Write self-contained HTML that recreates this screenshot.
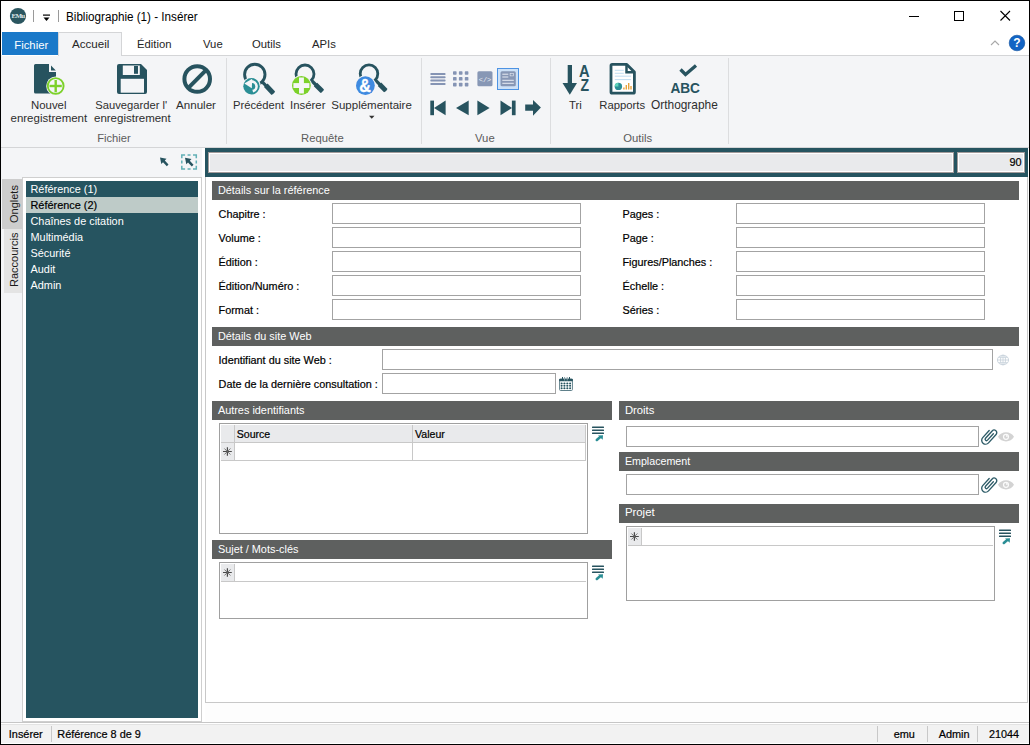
<!DOCTYPE html>
<html><head><meta charset="utf-8">
<style>
*{box-sizing:border-box;margin:0;padding:0}
html,body{width:1030px;height:745px;overflow:hidden;background:#fff}
body{position:relative;font-family:"Liberation Sans",sans-serif;color:#000}
.a{position:absolute}
.t{position:absolute;white-space:nowrap;line-height:1;-webkit-text-stroke:0.2px currentColor}
svg{position:absolute;left:0;top:0}
</style></head><body>
<div class="a" style="left:0px;top:0px;width:1030px;height:1px;background:#000;"></div>
<div class="a" style="left:0px;top:0px;width:1px;height:745px;background:#000;"></div>
<div class="a" style="left:1029px;top:0px;width:1px;height:745px;background:#000;"></div>
<div class="a" style="left:0px;top:744px;width:1030px;height:1px;background:#000;"></div>
<div class="t" style="left:66.30px;top:10.59px;font-size:12.3px;color:#000;-webkit-text-stroke:0;transform:scaleX(0.949);transform-origin:0 0">Bibliographie (1) - Insérer</div>
<div class="a" style="left:33px;top:10px;width:1px;height:12px;background:#9a9a9a;"></div>
<div class="a" style="left:58px;top:10px;width:1px;height:12px;background:#9a9a9a;"></div>
<div class="a" style="left:2px;top:32px;width:56px;height:23px;background:#1a79c9;"></div>
<div class="t" style="left:14.30px;top:40.43px;font-size:11.3px;color:#fff;-webkit-text-stroke:0">Fichier</div>
<div class="a" style="left:58px;top:32px;width:64px;height:24px;background:#f4f5f7;border:1px solid #d4d5d7;border-bottom:none"></div>
<div class="a" style="left:122px;top:55px;width:907px;height:1px;background:#d4d5d7;"></div>
<div class="a" style="left:1px;top:55px;width:1px;height:1px;background:#f4f5f7;"></div>
<div class="t" style="left:72.00px;top:37.78px;font-size:11.6px;color:#262626;-webkit-text-stroke:0">Accueil</div>
<div class="t" style="left:137.00px;top:39.43px;font-size:11.3px;color:#262626;-webkit-text-stroke:0">Édition</div>
<div class="t" style="left:203.00px;top:39.43px;font-size:11.3px;color:#262626;-webkit-text-stroke:0">Vue</div>
<div class="t" style="left:252.00px;top:39.43px;font-size:11.3px;color:#262626;-webkit-text-stroke:0">Outils</div>
<div class="t" style="left:312.00px;top:39.43px;font-size:11.3px;color:#262626;-webkit-text-stroke:0">APIs</div>
<div class="a" style="left:1px;top:56px;width:1028px;height:91px;background:#f4f5f7;"></div>
<div class="a" style="left:1px;top:147px;width:1028px;height:1px;background:#d4d5d7;"></div>
<div class="a" style="left:226px;top:58px;width:1px;height:86px;background:#dcdddf;"></div>
<div class="a" style="left:421px;top:58px;width:1px;height:86px;background:#dcdddf;"></div>
<div class="a" style="left:550px;top:58px;width:1px;height:86px;background:#dcdddf;"></div>
<div class="a" style="left:728px;top:58px;width:1px;height:86px;background:#dcdddf;"></div>
<div class="t" style="left:31.00px;top:100.35px;font-size:11.4px;color:#2e2e2e;-webkit-text-stroke:0">Nouvel</div>
<div class="t" style="left:10.50px;top:112.97px;font-size:11.5px;color:#2e2e2e;-webkit-text-stroke:0">enregistrement</div>
<div class="t" style="left:95.30px;top:99.92px;font-size:11.2px;color:#2e2e2e;-webkit-text-stroke:0">Sauvegarder l'</div>
<div class="t" style="left:94.00px;top:112.97px;font-size:11.5px;color:#2e2e2e;-webkit-text-stroke:0">enregistrement</div>
<div class="t" style="left:176.00px;top:99.18px;font-size:11.6px;color:#2e2e2e;-webkit-text-stroke:0">Annuler</div>
<div class="t" style="left:233.00px;top:99.92px;font-size:11.2px;color:#2e2e2e;-webkit-text-stroke:0">Précédent</div>
<div class="t" style="left:290.00px;top:100.35px;font-size:11.4px;color:#2e2e2e;-webkit-text-stroke:0">Insérer</div>
<div class="t" style="left:331.30px;top:100.27px;font-size:11.5px;color:#2e2e2e;-webkit-text-stroke:0">Supplémentaire</div>
<div class="t" style="left:569.00px;top:100.35px;font-size:11.4px;color:#2e2e2e;-webkit-text-stroke:0">Tri</div>
<div class="t" style="left:599.30px;top:100.43px;font-size:11.3px;color:#2e2e2e;-webkit-text-stroke:0">Rapports</div>
<div class="t" style="left:651.00px;top:99.93px;font-size:11.9px;color:#2e2e2e;-webkit-text-stroke:0">Orthographe</div>
<div class="t" style="left:97.20px;top:133.32px;font-size:11.2px;color:#5c5c5c;-webkit-text-stroke:0">Fichier</div>
<div class="t" style="left:301.00px;top:132.93px;font-size:11.3px;color:#5c5c5c;-webkit-text-stroke:0">Requête</div>
<div class="t" style="left:475.00px;top:132.93px;font-size:11.3px;color:#5c5c5c;-webkit-text-stroke:0">Vue</div>
<div class="t" style="left:623.20px;top:132.93px;font-size:11.3px;color:#5c5c5c;-webkit-text-stroke:0">Outils</div>
<div class="a" style="left:1px;top:148px;width:204px;height:574px;background:#f4f5f7;"></div>
<div class="a" style="left:2px;top:179px;width:20px;height:50px;background:#cdcdcd;"></div>
<div class="a" style="left:4px;top:229px;width:18px;height:64px;background:#e4e4e4;"></div>
<div class="a" style="left:22px;top:177px;width:180px;height:545px;background:#fff;border:1px solid #cfcfcf"></div>
<div class="a" style="left:26px;top:181px;width:172px;height:537px;background:#265460;"></div>
<div class="a" style="left:26px;top:197px;width:172px;height:16px;background:#becbc8;"></div>
<div class="t" style="left:30.50px;top:183.97px;font-size:10.9px;color:#fff;-webkit-text-stroke:0">Référence (1)</div>
<div class="t" style="left:30.50px;top:199.97px;font-size:10.9px;color:#000;">Référence (2)</div>
<div class="t" style="left:30.50px;top:215.97px;font-size:10.9px;color:#fff;-webkit-text-stroke:0">Chaînes de citation</div>
<div class="t" style="left:30.50px;top:231.97px;font-size:10.9px;color:#fff;-webkit-text-stroke:0">Multimédia</div>
<div class="t" style="left:30.50px;top:247.97px;font-size:10.9px;color:#fff;-webkit-text-stroke:0">Sécurité</div>
<div class="t" style="left:30.50px;top:263.97px;font-size:10.9px;color:#fff;-webkit-text-stroke:0">Audit</div>
<div class="t" style="left:30.50px;top:279.97px;font-size:10.9px;color:#fff;-webkit-text-stroke:0">Admin</div>
<div class="t" style="left:9.3px;top:222.6px;font-size:11px;color:#1a1a1a;-webkit-text-stroke:0;transform-origin:0 0;transform:rotate(-90deg)">Onglets</div>
<div class="t" style="left:9.3px;top:286.5px;font-size:11px;color:#1a1a1a;-webkit-text-stroke:0;transform-origin:0 0;transform:rotate(-90deg)">Raccourcis</div>
<div class="a" style="left:202px;top:148px;width:3px;height:574px;background:#fff;"></div>
<div class="a" style="left:205px;top:177px;width:823px;height:526px;background:#fff;border:1px solid #c8c8c8;border-top:none"></div>
<div class="a" style="left:205px;top:703px;width:824px;height:19px;background:#fdfdfd;"></div>
<div class="a" style="left:1px;top:722px;width:1028px;height:1px;background:#c6c6c6;"></div>
<div class="a" style="left:1px;top:723px;width:1028px;height:1px;background:#fff;"></div>
<div class="a" style="left:1px;top:724px;width:1028px;height:1px;background:#e3e3e3;"></div>
<div class="a" style="left:1px;top:725px;width:1028px;height:18px;background:#f2f2f2;"></div>
<div class="a" style="left:1px;top:743px;width:1028px;height:1px;background:#fff;"></div>
<div class="a" style="left:51px;top:726px;width:1px;height:16px;background:#c8c8c8;"></div>
<div class="a" style="left:877px;top:726px;width:1px;height:16px;background:#c8c8c8;"></div>
<div class="a" style="left:927px;top:726px;width:1px;height:16px;background:#c8c8c8;"></div>
<div class="a" style="left:977px;top:726px;width:1px;height:16px;background:#c8c8c8;"></div>
<div class="t" style="left:8.80px;top:728.77px;font-size:10.9px;color:#000;">Insérer</div>
<div class="t" style="left:57.30px;top:728.77px;font-size:10.9px;color:#000;">Référence 8 de 9</div>
<div class="t" style="left:893.70px;top:728.77px;font-size:10.9px;color:#000;">emu</div>
<div class="t" style="left:938.70px;top:728.77px;font-size:10.9px;color:#000;">Admin</div>
<div class="t" style="left:989.00px;top:728.86px;font-size:10.8px;color:#000;">21044</div>
<div class="a" style="left:205px;top:148px;width:823px;height:29px;background:#265460;"></div>
<div class="a" style="left:208px;top:152px;width:746px;height:21px;background:#e9eaec;border:1px solid #a29b9b;box-shadow:inset 0 0 0 1px #fff"></div>
<div class="a" style="left:957px;top:152px;width:68px;height:21px;background:#e9eaec;border:1px solid #a29b9b;box-shadow:inset 0 0 0 1px #fff"></div>
<div class="t" style="left:1009.50px;top:157.27px;font-size:10.9px;color:#000;">90</div>
<div class="a" style="left:212px;top:181px;width:807px;height:19px;background:#5e605f;"></div>
<div class="t" style="left:217.90px;top:184.57px;font-size:10.9px;color:#fff;-webkit-text-stroke:0">Détails sur la référence</div>
<div class="t" style="left:218.60px;top:209.02px;font-size:10.85px;color:#000;">Chapitre :</div>
<div class="a" style="left:332px;top:203px;width:249px;height:21px;background:#fff;border:1px solid #a3a3a3"></div>
<div class="t" style="left:622.50px;top:209.02px;font-size:10.85px;color:#000;">Pages :</div>
<div class="a" style="left:736px;top:203px;width:249px;height:21px;background:#fff;border:1px solid #a3a3a3"></div>
<div class="t" style="left:218.60px;top:233.02px;font-size:10.85px;color:#000;">Volume :</div>
<div class="a" style="left:332px;top:227px;width:249px;height:21px;background:#fff;border:1px solid #a3a3a3"></div>
<div class="t" style="left:622.50px;top:233.02px;font-size:10.85px;color:#000;">Page :</div>
<div class="a" style="left:736px;top:227px;width:249px;height:21px;background:#fff;border:1px solid #a3a3a3"></div>
<div class="t" style="left:218.60px;top:257.02px;font-size:10.85px;color:#000;">Édition :</div>
<div class="a" style="left:332px;top:251px;width:249px;height:21px;background:#fff;border:1px solid #a3a3a3"></div>
<div class="t" style="left:622.50px;top:257.02px;font-size:10.85px;color:#000;">Figures/Planches :</div>
<div class="a" style="left:736px;top:251px;width:249px;height:21px;background:#fff;border:1px solid #a3a3a3"></div>
<div class="t" style="left:218.60px;top:281.02px;font-size:10.85px;color:#000;">Édition/Numéro :</div>
<div class="a" style="left:332px;top:275px;width:249px;height:21px;background:#fff;border:1px solid #a3a3a3"></div>
<div class="t" style="left:622.50px;top:281.02px;font-size:10.85px;color:#000;">Échelle :</div>
<div class="a" style="left:736px;top:275px;width:249px;height:21px;background:#fff;border:1px solid #a3a3a3"></div>
<div class="t" style="left:218.60px;top:305.02px;font-size:10.85px;color:#000;">Format :</div>
<div class="a" style="left:332px;top:299px;width:249px;height:21px;background:#fff;border:1px solid #a3a3a3"></div>
<div class="t" style="left:622.50px;top:305.02px;font-size:10.85px;color:#000;">Séries :</div>
<div class="a" style="left:736px;top:299px;width:249px;height:21px;background:#fff;border:1px solid #a3a3a3"></div>
<div class="a" style="left:212px;top:327px;width:807px;height:19px;background:#5e605f;"></div>
<div class="t" style="left:217.90px;top:330.57px;font-size:10.9px;color:#fff;-webkit-text-stroke:0">Détails du site Web</div>
<div class="t" style="left:218.60px;top:355.02px;font-size:10.85px;color:#000;">Identifiant du site Web :</div>
<div class="a" style="left:382px;top:349px;width:611px;height:21px;background:#fff;border:1px solid #a3a3a3"></div>
<div class="t" style="left:218.60px;top:379.02px;font-size:10.85px;color:#000;">Date de la dernière consultation :</div>
<div class="a" style="left:382px;top:373px;width:174px;height:21px;background:#fff;border:1px solid #a3a3a3"></div>
<div class="a" style="left:212px;top:401px;width:400px;height:19px;background:#5e605f;"></div>
<div class="t" style="left:217.90px;top:404.57px;font-size:10.9px;color:#fff;-webkit-text-stroke:0">Autres identifiants</div>
<div class="a" style="left:619px;top:401px;width:400px;height:19px;background:#5e605f;"></div>
<div class="t" style="left:624.90px;top:404.83px;font-size:11.3px;color:#fff;-webkit-text-stroke:0">Droits</div>
<div class="a" style="left:626px;top:426px;width:353px;height:21px;background:#fff;border:1px solid #a3a3a3"></div>
<div class="a" style="left:619px;top:452px;width:400px;height:19px;background:#5e605f;"></div>
<div class="t" style="left:624.90px;top:455.74px;font-size:10.7px;color:#fff;-webkit-text-stroke:0">Emplacement</div>
<div class="a" style="left:626px;top:474px;width:353px;height:21px;background:#fff;border:1px solid #a3a3a3"></div>
<div class="a" style="left:619px;top:504px;width:400px;height:19px;background:#5e605f;"></div>
<div class="t" style="left:624.90px;top:507.15px;font-size:11.4px;color:#fff;-webkit-text-stroke:0">Projet</div>
<div class="a" style="left:212px;top:540px;width:400px;height:19px;background:#5e605f;"></div>
<div class="t" style="left:217.90px;top:543.57px;font-size:10.9px;color:#fff;-webkit-text-stroke:0">Sujet / Mots-clés</div>
<div class="a" style="left:219px;top:423px;width:369px;height:111px;background:#fff;border:1px solid #a0a0a0"></div>
<div class="a" style="left:221px;top:425px;width:365px;height:17px;background:#e9eaec;"></div>
<div class="a" style="left:221px;top:442px;width:365px;height:1px;background:#c8c8c8;"></div>
<div class="a" style="left:234px;top:425px;width:1px;height:35px;background:#c8c8c8;"></div>
<div class="a" style="left:412px;top:425px;width:1px;height:35px;background:#c8c8c8;"></div>
<div class="a" style="left:585px;top:425px;width:1px;height:35px;background:#c8c8c8;"></div>
<div class="a" style="left:221px;top:443px;width:13px;height:17px;background:#e9eaec;"></div>
<div class="a" style="left:221px;top:460px;width:365px;height:1px;background:#c8c8c8;"></div>
<div class="t" style="left:236.70px;top:428.83px;font-size:10.6px;color:#000;">Source</div>
<div class="t" style="left:415.00px;top:428.83px;font-size:10.6px;color:#000;">Valeur</div>
<div class="a" style="left:219px;top:562px;width:369px;height:57px;background:#fff;border:1px solid #a0a0a0"></div>
<div class="a" style="left:221px;top:564px;width:13px;height:17px;background:#e9eaec;"></div>
<div class="a" style="left:234px;top:564px;width:1px;height:17px;background:#c8c8c8;"></div>
<div class="a" style="left:221px;top:581px;width:365px;height:1px;background:#c8c8c8;"></div>
<div class="a" style="left:626px;top:526px;width:369px;height:75px;background:#fff;border:1px solid #a0a0a0"></div>
<div class="a" style="left:628px;top:528px;width:13px;height:17px;background:#e9eaec;"></div>
<div class="a" style="left:641px;top:528px;width:1px;height:17px;background:#c8c8c8;"></div>
<div class="a" style="left:628px;top:545px;width:365px;height:1px;background:#c8c8c8;"></div><svg width="1030" height="745" viewBox="0 0 1030 745">
<!-- title bar icons -->
<circle cx="18" cy="16" r="8.1" fill="#2b5660"/>
<text x="18" y="18.4" font-family="Liberation Serif" font-size="7" font-weight="bold" fill="#dfe7ea" text-anchor="middle" letter-spacing="-0.7">EMu</text>
<rect x="43" y="14.5" width="7" height="1.2" fill="#000"/>
<path d="M43.5 17.5 H49.5 L46.5 21 Z" fill="#000"/>
<rect x="909" y="16" width="10" height="1" fill="#000"/>
<rect x="954.5" y="11.5" width="9" height="9" fill="none" stroke="#000" stroke-width="1"/>
<path d="M1000.5 11 L1010 20.5 M1010 11 L1000.5 20.5" stroke="#000" stroke-width="1.1"/>
<path d="M991 45 L995 41 L999 45" fill="none" stroke="#a8a8a8" stroke-width="1.1"/>
<circle cx="1017" cy="43" r="7.8" fill="#1264c4" stroke="#0d4f9e" stroke-width="0.6"/>
<text x="1017" y="47.3" font-family="Liberation Sans" font-size="12" font-weight="bold" fill="#fff" text-anchor="middle">?</text>

<!-- Nouvel enregistrement -->
<path d="M35.5 64 H49 V72 H56 V92 Q56 93.5 54.5 93.5 H35.5 Q34 93.5 34 92 V65.5 Q34 64 35.5 64 Z" fill="#27535f"/>
<path d="M51 65.5 L55.8 70.6 H51 Z" fill="#27535f"/>
<circle cx="55.7" cy="86" r="9.5" fill="#f4f5f7"/>
<circle cx="55.7" cy="86" r="7.9" fill="#f4f5f7" stroke="#7cd12a" stroke-width="1.9"/>
<rect x="54.5" y="80" width="2.4" height="12.3" fill="#7cd12a"/>
<rect x="49.5" y="84.8" width="12.3" height="2.4" fill="#7cd12a"/>

<!-- Sauvegarder -->
<path d="M119 64 H141 L147 70 V92 Q147 94 145 94 H119 Q117 94 117 92 V66 Q117 64 119 64 Z" fill="#27535f"/>
<rect x="122.8" y="65.5" width="17" height="9.5" fill="#f4f5f7"/>
<rect x="134" y="66" width="4" height="7.8" fill="#27535f"/>
<rect x="120.7" y="78.8" width="23.3" height="13.9" fill="#f4f5f7"/>

<!-- Annuler -->
<circle cx="197.2" cy="79" r="12.8" fill="none" stroke="#27535f" stroke-width="4"/>
<path d="M206.5 69.7 L187.9 88.3" stroke="#27535f" stroke-width="4"/>

<!-- Précédent -->
<circle cx="254.8" cy="74.5" r="10.2" fill="none" stroke="#27535f" stroke-width="2.9"/>
<path d="M262 81.7 L273.5 93.5" stroke="#27535f" stroke-width="3.2"/>
<path d="M265.8 85.3 L273.3 93.3" stroke="#27535f" stroke-width="5"/>
<circle cx="251.5" cy="86.3" r="9.3" fill="#f4f5f7"/>
<circle cx="251.5" cy="86.3" r="8.2" fill="#2a8e95"/>
<path d="M251.5 80.1 A6.3 6.3 0 0 1 253.1 92.5 L252.35 89.7 A3.3 3.3 0 0 0 251.5 83.1 Z" fill="#f4f5f7"/>
<path d="M244.3 83.6 L252.2 78.8 L251.8 88.2 Z" fill="#f4f5f7"/>

<!-- Insérer (query) -->
<circle cx="305" cy="74" r="9" fill="none" stroke="#27535f" stroke-width="2.8"/>
<path d="M311 80 L322.5 91.5" stroke="#27535f" stroke-width="3.3"/>
<path d="M315.5 84.5 L322.3 91.3" stroke="#27535f" stroke-width="4.8"/>
<circle cx="301.4" cy="85.5" r="10.4" fill="#f4f5f7"/>
<circle cx="301.4" cy="85.5" r="9.4" fill="#7cd12a"/>
<rect x="299" y="77.5" width="4.9" height="16" fill="#f4f5f7"/>
<rect x="293.4" y="83.1" width="16" height="4.9" fill="#f4f5f7"/>

<!-- Supplémentaire -->
<circle cx="369" cy="73.7" r="8.8" fill="none" stroke="#27535f" stroke-width="2.8"/>
<path d="M375 79.7 L386 90.8" stroke="#27535f" stroke-width="3.3"/>
<path d="M379.5 84.2 L385.8 90.6" stroke="#27535f" stroke-width="4.8"/>
<circle cx="365.4" cy="85.6" r="10.4" fill="#f4f5f7"/>
<circle cx="365.4" cy="85.6" r="9.4" fill="#3f8ae0"/>
<text x="365.1" y="91.8" font-family="Liberation Sans" font-size="18.3" font-weight="bold" fill="#fff" stroke="#fff" stroke-width="0.35" text-anchor="middle" transform="translate(365.1 0) scale(0.88 1) translate(-365.1 0)">&amp;</text>
<path d="M369 115.7 H374.5 L371.75 118.8 Z" fill="#333"/>

<!-- Vue row 1 -->
<g fill="#8594b4">
<rect x="430.3" y="73.1" width="15.3" height="2" rx="0.8"/>
<rect x="430.3" y="76.3" width="15.3" height="2" rx="0.8"/>
<rect x="430.3" y="79.6" width="15.3" height="2" rx="0.8"/>
<rect x="430.3" y="83" width="15.3" height="2" rx="0.8"/>
</g>
<g fill="#8594b4">
<rect x="453" y="71.2" width="3.6" height="3.6" rx="0.7"/><rect x="458.9" y="71.2" width="3.6" height="3.6" rx="0.7"/><rect x="464.8" y="71.2" width="3.6" height="3.6" rx="0.7"/>
<rect x="453" y="77" width="3.6" height="3.6" rx="0.7"/><rect x="458.9" y="77" width="3.6" height="3.6" rx="0.7"/><rect x="464.8" y="77" width="3.6" height="3.6" rx="0.7"/>
<rect x="453" y="82.8" width="3.6" height="3.6" rx="0.7"/><rect x="458.9" y="82.8" width="3.6" height="3.6" rx="0.7"/><rect x="464.8" y="82.8" width="3.6" height="3.6" rx="0.7"/>
</g>
<rect x="477.4" y="71.2" width="15.1" height="15.1" rx="1.5" fill="#8797b5"/>
<text x="485" y="81.5" font-family="Liberation Mono" font-size="7" fill="#e8ecf3" text-anchor="middle">&lt;/&gt;</text>
<rect x="497.5" y="68.5" width="21" height="21" fill="#cde1f7" stroke="#4d93e3" stroke-width="1"/>
<rect x="500.5" y="71.2" width="15.3" height="15.1" rx="1.5" fill="#8797b5"/>
<g fill="#e8ecf3"><rect x="502.3" y="73.7" width="6" height="1"/><rect x="502.3" y="76.5" width="6" height="1"/><rect x="502.3" y="79.8" width="11.5" height="1"/><rect x="502.3" y="82.8" width="11.5" height="1"/><rect x="509.8" y="73" width="3.8" height="3.2"/></g>
<rect x="510.4" y="73.6" width="2.6" height="2" fill="#8797b5"/>

<!-- Vue row 2 -->
<g fill="#27535f">
<rect x="430.3" y="100.6" width="3.7" height="14.6"/>
<path d="M434 107.9 L445.6 100.6 V115.2 Z"/>
<path d="M456 107.9 L468.7 100.6 V115.2 Z"/>
<path d="M489.6 107.9 L477.4 100.6 V115.2 Z"/>
<path d="M512 107.9 L500.5 100.6 V115.2 Z"/>
<rect x="511.9" y="100.6" width="3.7" height="14.6"/>
<path d="M525.2 104.4 H533 V100 L540.9 107.6 L533 115.7 V110.8 H525.2 Z"/>
</g>

<!-- Tri -->
<g fill="#27535f">
<rect x="567.7" y="65" width="4.3" height="19"/>
<path d="M562.5 83 H577 L569.8 94.8 Z"/>
</g>
<text x="584.4" y="76.7" font-family="Liberation Sans" font-size="16" font-weight="bold" fill="#27535f" text-anchor="middle" transform="translate(584.4 0) scale(0.92 1) translate(-584.4 0)">A</text>
<text x="584.8" y="91" font-family="Liberation Sans" font-size="16.5" font-weight="bold" fill="#27535f" text-anchor="middle" transform="translate(584.8 0) scale(0.85 1) translate(-584.8 0)">Z</text>

<!-- Rapports -->
<path d="M612.2 64.4 H626.8 L634.4 72 V92 Q634.4 93.2 633.2 93.2 H612.2 Q611 93.2 611 92 V65.6 Q611 64.4 612.2 64.4 Z" fill="#fff" stroke="#27535f" stroke-width="2.8" stroke-linejoin="round"/>
<path d="M626.5 64.5 V72.3 H634.3" fill="none" stroke="#27535f" stroke-width="2.5"/>
<g fill="#b9daf0"><rect x="614.8" y="69.8" width="9" height="0.9"/><rect x="614.8" y="72.8" width="9" height="0.9"/><rect x="614.8" y="75.7" width="16.3" height="0.9"/><rect x="614.8" y="79.2" width="16.3" height="0.9"/></g>
<circle cx="618.4" cy="86.4" r="3.7" fill="#2a8e95"/>
<path d="M618.4 86.4 V82.7 A3.7 3.7 0 0 0 614.7 86.4 Z" fill="#5fd3b8"/>
<g fill="#e8a23a"><rect x="623.2" y="87.5" width="1.4" height="2"/><rect x="625.6" y="85" width="1.4" height="4.5"/><rect x="628" y="83" width="1.4" height="6.5"/><rect x="630.3" y="86" width="1.4" height="3.5"/></g>

<!-- Orthographe -->
<path d="M680.5 69.5 L685.5 74.5 L696 65.5" fill="none" stroke="#27535f" stroke-width="3.3"/>
<text x="685.2" y="92.7" font-family="Liberation Sans" font-size="15.2" font-weight="bold" fill="#27535f" text-anchor="middle" transform="translate(685.2 0) scale(0.9 1) translate(-685.2 0)">ABC</text>

<!-- sidebar toolbar arrows -->
<path d="M160 157.5 L166.5 158.8 L164.8 160.5 L168.5 164.5 L166.8 166.3 L163 162.3 L161.3 164 Z" fill="#27535f"/>
<path d="M181.8 158.3 V155.0 H185.10000000000002 M187.55 155.0 H190.55 M193.0 155.0 H196.3 V158.3 M196.3 160.5 V163.5 M196.3 165.7 V169.0 H193.0 M190.55 169.0 H187.55 M185.10000000000002 169.0 H181.8 V165.7 M181.8 163.5 V160.5" fill="none" stroke="#62b0b6" stroke-width="1.5"/>
<path d="M185 157.8 L191.5 159.1 L189.8 160.8 L193.5 164.8 L191.8 166.6 L188 162.6 L186.3 164.3 Z" fill="#27535f"/>

<!-- form icons -->
<g fill="none" stroke="#c9d4dc" stroke-width="0.9">
<ellipse cx="1003" cy="360" rx="5.6" ry="4.8"/>
<ellipse cx="1003" cy="360" rx="2.5" ry="4.8"/>
<path d="M997.5 360 H1008.5 M998.5 357.3 H1007.5 M998.5 362.7 H1007.5 M1003 355.2 V364.8"/>
</g>
<!-- calendar -->
<rect x="559.6" y="379.2" width="12.8" height="11.3" rx="1" fill="#fff" stroke="#5f808a" stroke-width="1"/>
<rect x="559.1" y="378.7" width="13.8" height="2.6" rx="0.8" fill="#27535f"/>
<g stroke="#27535f" stroke-width="1"><path d="M562.5 377 V380.5 M569.5 377 V380.5"/></g>
<g stroke="#8aa3aa" stroke-width="1"><path d="M564.6 377 V380.5 M567.2 377 V380.5"/></g>
<g fill="#cfdbde"><rect x="561" y="383" width="10" height="0.9"/><rect x="561" y="385.3" width="10" height="0.9"/><rect x="561" y="387.9" width="10" height="0.9"/></g>
<circle cx="561.6" cy="383.4" r="0.95" fill="#27535f"/>
<circle cx="564.4" cy="383.4" r="0.95" fill="#27535f"/>
<circle cx="567.3" cy="383.4" r="0.95" fill="#27535f"/>
<circle cx="570.1" cy="383.4" r="0.95" fill="#27535f"/>
<circle cx="561.6" cy="385.7" r="0.95" fill="#27535f"/>
<circle cx="564.4" cy="385.7" r="0.95" fill="#27535f"/>
<circle cx="567.3" cy="385.7" r="0.95" fill="#27535f"/>
<circle cx="570.1" cy="385.7" r="0.95" fill="#27535f"/>
<circle cx="561.6" cy="388.3" r="0.95" fill="#27535f"/>
<circle cx="564.4" cy="388.3" r="0.95" fill="#27535f"/>
<circle cx="567.3" cy="388.3" r="0.95" fill="#27535f"/>
<circle cx="570.1" cy="388.3" r="0.95" fill="#27535f"/>
<!-- clip + eye -->
<g>
<g transform="translate(988.8 436.7) rotate(42) scale(0.85) translate(-5.4 -11)">
<path d="M0.8 5.2 V16.6 A4.6 4.6 0 0 0 10 16.6 V3.3 A3.1 3.1 0 0 0 3.8 3.3 V15 A1.6 1.6 0 0 0 7 15 V4.8" fill="none" stroke="#2e5c68" stroke-width="1.6" stroke-linecap="round"/>
</g>
<path d="M998 436.8 C1001.2 430.6 1010.8 430.6 1014 436.8 C1010.8 443 1001.2 443 998 436.8 Z" fill="#d3d3d3"/>
<circle cx="1006" cy="436.8" r="3.1" fill="#fbfbfb"/>
<circle cx="1006" cy="436.8" r="1.9" fill="#d3d3d3"/>
<path d="M1006 436.8 V434.9 A1.9 1.9 0 0 1 1007.9 436.8 Z" fill="#fbfbfb"/>
</g>
<g transform="translate(0 48)">
<g transform="translate(988.8 436.7) rotate(42) scale(0.85) translate(-5.4 -11)">
<path d="M0.8 5.2 V16.6 A4.6 4.6 0 0 0 10 16.6 V3.3 A3.1 3.1 0 0 0 3.8 3.3 V15 A1.6 1.6 0 0 0 7 15 V4.8" fill="none" stroke="#2e5c68" stroke-width="1.6" stroke-linecap="round"/>
</g>
<path d="M998 436.8 C1001.2 430.6 1010.8 430.6 1014 436.8 C1010.8 443 1001.2 443 998 436.8 Z" fill="#d3d3d3"/>
<circle cx="1006" cy="436.8" r="3.1" fill="#fbfbfb"/>
<circle cx="1006" cy="436.8" r="1.9" fill="#d3d3d3"/>
<path d="M1006 436.8 V434.9 A1.9 1.9 0 0 1 1007.9 436.8 Z" fill="#fbfbfb"/>
</g>
<!-- list icons -->
<g>
<g fill="#27535f"><rect x="592" y="426.4" width="12" height="1.5" rx="0.5"/><rect x="592" y="429.4" width="12" height="1.5" rx="0.5"/><rect x="592" y="432.4" width="12" height="1.5" rx="0.5"/></g>
<path d="M596.8 439.9 L600 437.2" stroke="#2a8e95" stroke-width="2.6" stroke-linecap="round"/>
<path d="M598 435.4 L603 435.2 L602.7 439.8 Z" fill="#2a8e95"/>
</g>
<g transform="translate(0 139)">
<g fill="#27535f"><rect x="592" y="426.4" width="12" height="1.5" rx="0.5"/><rect x="592" y="429.4" width="12" height="1.5" rx="0.5"/><rect x="592" y="432.4" width="12" height="1.5" rx="0.5"/></g>
<path d="M596.8 439.9 L600 437.2" stroke="#2a8e95" stroke-width="2.6" stroke-linecap="round"/>
<path d="M598 435.4 L603 435.2 L602.7 439.8 Z" fill="#2a8e95"/>
</g>
<g transform="translate(407 103)">
<g fill="#27535f"><rect x="592" y="426.4" width="12" height="1.5" rx="0.5"/><rect x="592" y="429.4" width="12" height="1.5" rx="0.5"/><rect x="592" y="432.4" width="12" height="1.5" rx="0.5"/></g>
<path d="M596.8 439.9 L600 437.2" stroke="#2a8e95" stroke-width="2.6" stroke-linecap="round"/>
<path d="M598 435.4 L603 435.2 L602.7 439.8 Z" fill="#2a8e95"/>
</g>
<!-- asterisks -->
<g>
<path d="M227.4 447.2 V455.8 M223 451.5 H231.8" stroke="#4a4a4a" stroke-width="1.2"/>
<path d="M224.4 448.5 L230.4 454.5 M230.4 448.5 L224.4 454.5" stroke="#6a6a6a" stroke-width="0.9"/>
</g>
<g transform="translate(0 121)">
<path d="M227.4 447.2 V455.8 M223 451.5 H231.8" stroke="#4a4a4a" stroke-width="1.2"/>
<path d="M224.4 448.5 L230.4 454.5 M230.4 448.5 L224.4 454.5" stroke="#6a6a6a" stroke-width="0.9"/>
</g>
<g transform="translate(407 85)">
<path d="M227.4 447.2 V455.8 M223 451.5 H231.8" stroke="#4a4a4a" stroke-width="1.2"/>
<path d="M224.4 448.5 L230.4 454.5 M230.4 448.5 L224.4 454.5" stroke="#6a6a6a" stroke-width="0.9"/>
</g>
</svg>

</body></html>
